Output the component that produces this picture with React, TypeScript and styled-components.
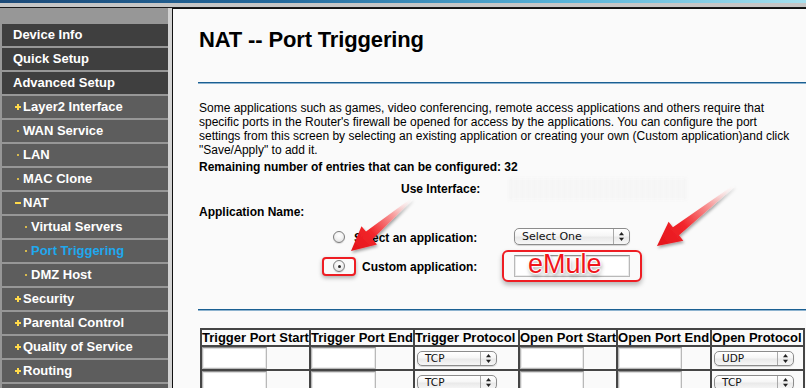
import React from "react";
import styled, { createGlobalStyle } from "styled-components";

const GlobalStyle = createGlobalStyle`
  html, body { margin: 0; padding: 0; background: #fafafa; }
  body { font-family: "Liberation Sans", Arial, sans-serif; }
`;

const FONT = `"Liberation Sans", Arial, Helvetica, sans-serif`;
const UI_FONT = `"DejaVu Sans", "Liberation Sans", sans-serif`;

const Page = styled.div`
  position: relative;
  width: 806px;
  height: 388px;
  overflow: hidden;
  display: flex;
  flex-direction: column;
  background: #fafafa;
`;

const TopStripe = styled.div`
  height: 3px;
  flex: none;
  background: linear-gradient(90deg, #1c4a78 0%, #23699c 35%, #58b3d8 70%, #a6e0ee 100%);
`;

const GrayStripe = styled.div`
  height: 4px;
  flex: none;
  background: #c6c6c6;
  border-bottom: 1px solid #1a1a1a;
`;

const Main = styled.div`
  flex: 1;
  display: flex;
  min-height: 0;
`;

const Sidebar = styled.nav`
  width: 166px;
  flex: none;
  padding: 16px 0 0 2px;
  background: #979797;
  display: flex;
  flex-direction: column;
  gap: 2px;
`;

const Gutter = styled.div`
  width: 4px;
  flex: none;
  background: #d2d2d2;
  border-right: 1px solid #111;
`;

const MenuItem = styled.div<{ $tone: "top" | "sub"; $indent: number; $active?: boolean }>`
  height: 22px;
  box-sizing: border-box;
  padding: 0 0 1px ${(p) => p.$indent}px;
  flex: none;
  display: flex;
  align-items: center;
  background: ${(p) => (p.$tone === "top" ? "#3f3f3f" : "#5d5d5d")};
  color: ${(p) => (p.$active ? "#1fa8ee" : "#ffffff")};
  font: bold 13px/20px ${FONT};
  white-space: nowrap;
`;

const Marker = styled.span<{ $kind: "plus" | "dot" | "minus" }>`
  position: relative;
  width: 6px;
  height: 6px;
  flex: none;
  margin-right: 2px;
  margin-top: 1px;
  &::before {
    content: "";
    position: absolute;
    background: #ffd94a;
    ${(p) =>
      p.$kind === "dot"
        ? "left: 2px; top: 2px; width: 2px; height: 2px; border-radius: 1px;"
        : "left: 0; top: 2px; width: 6px; height: 2px;"}
  }
  &::after {
    content: "";
    position: absolute;
    background: #ffd94a;
    ${(p) => (p.$kind === "plus" ? "left: 2px; top: 0; width: 2px; height: 6px;" : "display: none;")}
  }
`;

const Content = styled.main`
  flex: 1;
  min-width: 0;
  border-top: 1px solid #111;
  padding: 18px 0 0 25px;
  display: flex;
  flex-direction: column;
  background: #fafafa;
  color: #000;
`;

const Title = styled.h1`
  margin: 0 0 0 1px;
  font: bold 22px/26px ${FONT};
  letter-spacing: -0.15px;
`;

const Rule = styled.div<{ $mt: number }>`
  height: 2px;
  flex: none;
  margin-top: ${(p) => p.$mt}px;
  background: linear-gradient(#1a5f92 0 50%, #8db3cf 50% 100%);
`;

const Intro = styled.p`
  margin: 17px 0 0 1px;
  font: 12px/14px ${FONT};
  white-space: nowrap;
`;

const Strong = styled.div<{ $mt: number }>`
  margin: ${(p) => p.$mt}px 0 0 1px;
  font: bold 12px/14px ${FONT};
  white-space: nowrap;
`;

const InterfaceRow = styled.div`
  margin: 4px 0 0 202px;
  display: flex;
  align-items: center;
  height: 22px;
`;

const Hidden = styled.div`
  margin-left: 29px;
  width: 178px;
  height: 22px;
  background: repeating-linear-gradient(90deg, #f4f4f4 0 3px, #f8f8f8 3px 6px);
  filter: blur(1.5px);
`;

const OptionRow = styled.div<{ $mt: number; $pl: number; $h: number }>`
  margin-top: ${(p) => p.$mt}px;
  padding-left: ${(p) => p.$pl}px;
  height: ${(p) => p.$h}px;
  display: flex;
  align-items: center;
`;

const OptionLabel = styled.span<{ $ml: number; $w: number }>`
  margin-left: ${(p) => p.$ml}px;
  width: ${(p) => p.$w}px;
  flex: none;
  font: bold 12px/14px ${FONT};
  white-space: nowrap;
  padding-top: 2px;
`;

const Radio = styled.span<{ $checked?: boolean }>`
  width: 12px;
  height: 12px;
  flex: none;
  box-sizing: border-box;
  border-radius: 50%;
  border: 1px solid #7b7b7b;
  background: radial-gradient(circle at 50% 35%, #ffffff 0%, #f3f3f3 45%, #d6d6d6 100%);
  box-shadow: 0 1px 1px rgba(0, 0, 0, 0.12);
  display: flex;
  align-items: center;
  justify-content: center;
  &::after {
    content: "";
    width: 3px;
    height: 3px;
    border-radius: 50%;
    background: ${(p) => (p.$checked ? "#2b2b2b" : "transparent")};
  }
`;

const RedFrame = styled.span`
  width: 34px;
  height: 19px;
  flex: none;
  box-sizing: border-box;
  border: 2px solid #ee1d23;
  border-radius: 4px;
  box-shadow: 0 2px 4px rgba(0, 0, 0, 0.3);
  display: flex;
  align-items: center;
  justify-content: center;
  background: #fafafa;
`;

const EmuleBox = styled.span`
  position: relative;
  width: 140px;
  height: 32px;
  flex: none;
  box-sizing: border-box;
  border: 2px solid #ee1d23;
  border-radius: 6px;
  box-shadow: 0 3px 5px rgba(0, 0, 0, 0.28);
  display: flex;
  align-items: center;
  padding-left: 10px;
  background: #fafafa;
`;

const EmuleText = styled.span`
  position: absolute;
  left: 24px;
  top: -1px;
  font: 27px/26px ${FONT};
  color: #f0141b;
  text-shadow: 0 0 1px #fff, 1px 0 1px #fff, -1px 0 1px #fff, 0 1px 1px #fff, 0 -1px 1px #fff,
    1px 3px 4px rgba(0, 0, 0, 0.45);
`;

const TextField = styled.span<{ $w: number; $h: number }>`
  display: block;
  width: ${(p) => p.$w}px;
  height: ${(p) => p.$h}px;
  box-sizing: border-box;
  background: #fff;
  border: 1px solid #b9b9b9;
  border-top-color: #8f8f8f;
  box-shadow: inset 0 1px 1px rgba(0, 0, 0, 0.08), inset 0 0 0 1px #ececec;
`;

const MacSelect = styled.span<{ $w: number; $h: number; $fs: number; $ml?: number }>`
  display: flex;
  align-items: center;
  width: ${(p) => p.$w}px;
  height: ${(p) => p.$h}px;
  margin-left: ${(p) => p.$ml ?? 0}px;
  box-sizing: border-box;
  border: 1px solid #8c8c8c;
  border-radius: 5px;
  background: linear-gradient(#ffffff 0%, #f6f6f6 45%, #e9e9e9 55%, #f7f7f7 100%);
  box-shadow: 0 1px 1px rgba(0, 0, 0, 0.15);
  font: ${(p) => p.$fs}px/1 ${UI_FONT};
  color: #111;
  overflow: hidden;
`;

const SelectText = styled.span`
  flex: 1;
  padding-left: 7px;
  white-space: nowrap;
`;

const SelectArrows = styled.span`
  width: 15px;
  align-self: stretch;
  border-left: 1px solid #a9a9a9;
  display: flex;
  align-items: center;
  justify-content: center;
`;

const Grid = styled.table`
  margin: 17px 0 0 2px;
  border: 1px solid #454545;
  border-spacing: 0;
  border-collapse: separate;
  align-self: flex-start;
`;

const HeadCell = styled.th<{ $w: number }>`
  width: ${(p) => p.$w}px;
  padding: 0;
  border: 1px solid #454545;
  font: bold 13px/15px ${FONT};
  text-align: left;
  white-space: nowrap;
  color: #000;
`;

const Cell = styled.td`
  padding: 0;
  height: 22px;
  border: 1px solid #454545;
  vertical-align: middle;
`;

const Overlay = styled.svg`
  position: absolute;
  left: 0;
  top: 0;
  pointer-events: none;
`;

const Arrows = () => (
  <svg width="9" height="11" viewBox="0 0 9 11">
    <path d="M4.5 1 L7 4.2 L2 4.2 Z" fill="#222" />
    <path d="M4.5 10 L7 6.8 L2 6.8 Z" fill="#222" />
  </svg>
);

const Select = ({ label, w, h, fs, ml }: { label: string; w: number; h: number; fs: number; ml?: number }) => (
  <MacSelect $w={w} $h={h} $fs={fs} $ml={ml}>
    <SelectText>{label}</SelectText>
    <SelectArrows>
      <Arrows />
    </SelectArrows>
  </MacSelect>
);

type Menu = { label: string; tone: "top" | "sub"; level: 1 | 2 | 3; kind?: "plus" | "dot" | "minus"; active?: boolean };

const menu: Menu[] = [
  { label: "Device Info", tone: "top", level: 1 },
  { label: "Quick Setup", tone: "top", level: 1 },
  { label: "Advanced Setup", tone: "top", level: 1 },
  { label: "Layer2 Interface", tone: "sub", level: 2, kind: "plus" },
  { label: "WAN Service", tone: "sub", level: 2, kind: "dot" },
  { label: "LAN", tone: "sub", level: 2, kind: "dot" },
  { label: "MAC Clone", tone: "sub", level: 2, kind: "dot" },
  { label: "NAT", tone: "sub", level: 2, kind: "minus" },
  { label: "Virtual Servers", tone: "sub", level: 3, kind: "dot" },
  { label: "Port Triggering", tone: "sub", level: 3, kind: "dot", active: true },
  { label: "DMZ Host", tone: "sub", level: 3, kind: "dot" },
  { label: "Security", tone: "sub", level: 2, kind: "plus" },
  { label: "Parental Control", tone: "sub", level: 2, kind: "plus" },
  { label: "Quality of Service", tone: "sub", level: 2, kind: "plus" },
  { label: "Routing", tone: "sub", level: 2, kind: "plus" },
  { label: "", tone: "sub", level: 2 },
];

const indentFor = (level: number) => (level === 1 ? 11 : level === 2 ? 13 : 21);

const headers = [
  { t: "Trigger Port Start", w: 107 },
  { t: "Trigger Port End", w: 102 },
  { t: "Trigger Protocol", w: 103 },
  { t: "Open Port Start", w: 96 },
  { t: "Open Port End", w: 92 },
  { t: "Open Protocol", w: 91 },
];

const rows = [
  { trig: "TCP", open: "UDP" },
  { trig: "TCP", open: "TCP" },
];

function arrowPoints(tx: number, ty: number, px: number, py: number, h: number, hw: number, sw: number) {
  const dx = px - tx;
  const dy = py - ty;
  const len = Math.hypot(dx, dy);
  const ux = dx / len;
  const uy = dy / len;
  const nx = -uy;
  const ny = ux;
  const bx = px - ux * h;
  const by = py - uy * h;
  const pts: [number, number][] = [
    [tx + nx * 1, ty + ny * 1],
    [bx + nx * sw, by + ny * sw],
    [bx + nx * hw, by + ny * hw],
    [px, py],
    [bx - nx * hw, by - ny * hw],
    [bx - nx * sw, by - ny * sw],
    [tx - nx * 1, ty - ny * 1],
  ];
  return pts.map((p) => p.map((v) => v.toFixed(1)).join(",")).join(" ");
}

const annotationArrows = [
  { id: "a1", tx: 412, ty: 199, px: 351, py: 251 },
  { id: "a2", tx: 734, ty: 186, px: 657, py: 246 },
];

export default function App() {
  return (
    <>
      <GlobalStyle />
      <Page>
        <TopStripe />
        <GrayStripe />
        <Main>
          <Sidebar>
            {menu.map((m, i) => (
              <MenuItem key={i} $tone={m.tone} $indent={indentFor(m.level)} $active={m.active}>
                {m.kind && <Marker $kind={m.kind} />}
                {m.label}
              </MenuItem>
            ))}
          </Sidebar>
          <Gutter />
          <Content>
            <Title>NAT -- Port Triggering</Title>
            <Rule $mt={29} />
            <Intro>
              Some applications such as games, video conferencing, remote access applications and others require that
              <br />
              specific ports in the Router's firewall be opened for access by the applications. You can configure the port
              <br />
              settings from this screen by selecting an existing application or creating your own (Custom application)and click
              <br />
              "Save/Apply" to add it.
            </Intro>
            <Strong $mt={3}>Remaining number of entries that can be configured: 32</Strong>
            <InterfaceRow>
              <Strong $mt={0}>Use Interface:</Strong>
              <Hidden />
            </InterfaceRow>
            <Strong $mt={5}>Application Name:</Strong>
            <OptionRow $mt={9} $pl={135} $h={20}>
              <Radio />
              <OptionLabel $ml={9} $w={160}>
                Select an application:
              </OptionLabel>
              <Select label="Select One" w={116} h={17} fs={11} />
            </OptionRow>
            <OptionRow $mt={5} $pl={124} $h={32}>
              <RedFrame>
                <Radio $checked />
              </RedFrame>
              <OptionLabel $ml={6} $w={140}>
                Custom application:
              </OptionLabel>
              <EmuleBox>
                <TextField $w={116} $h={22} />
                <EmuleText>eMule</EmuleText>
              </EmuleBox>
            </OptionRow>
            <Rule $mt={27} />
            <Grid>
              <thead>
                <tr>
                  {headers.map((h) => (
                    <HeadCell key={h.t} $w={h.w}>
                      {h.t}
                    </HeadCell>
                  ))}
                </tr>
              </thead>
              <tbody>
                {rows.map((r, i) => (
                  <tr key={i}>
                    <Cell>
                      <TextField $w={65} $h={22} />
                    </Cell>
                    <Cell>
                      <TextField $w={65} $h={22} />
                    </Cell>
                    <Cell>
                      <Select label={r.trig} w={80} h={15} fs={10.5} ml={2} />
                    </Cell>
                    <Cell>
                      <TextField $w={64} $h={22} />
                    </Cell>
                    <Cell>
                      <TextField $w={64} $h={22} />
                    </Cell>
                    <Cell>
                      <Select label={r.open} w={80} h={15} fs={10.5} ml={2} />
                    </Cell>
                  </tr>
                ))}
              </tbody>
            </Grid>
          </Content>
        </Main>
        <Overlay width="806" height="388" viewBox="0 0 806 388">
          <defs>
            <filter id="arrowShadow" x="-20%" y="-20%" width="140%" height="140%">
              <feDropShadow dx="1" dy="2" stdDeviation="1.6" floodColor="#000" floodOpacity="0.35" />
            </filter>
            {annotationArrows.map((a) => (
              <linearGradient key={a.id} id={`g-${a.id}`} gradientUnits="userSpaceOnUse" x1={a.tx} y1={a.ty} x2={a.px} y2={a.py}>
                <stop offset="0" stopColor="#ffffff" stopOpacity="0.2" />
                <stop offset="0.3" stopColor="#f8a0a0" />
                <stop offset="0.65" stopColor="#f2262b" />
                <stop offset="1" stopColor="#e3141a" />
              </linearGradient>
            ))}
          </defs>
          {annotationArrows.map((a) => (
            <polygon
              key={a.id}
              points={arrowPoints(a.tx, a.ty, a.px, a.py, 24, 12, 5)}
              fill={`url(#g-${a.id})`}
              filter="url(#arrowShadow)"
            />
          ))}
        </Overlay>
      </Page>
    </>
  );
}
